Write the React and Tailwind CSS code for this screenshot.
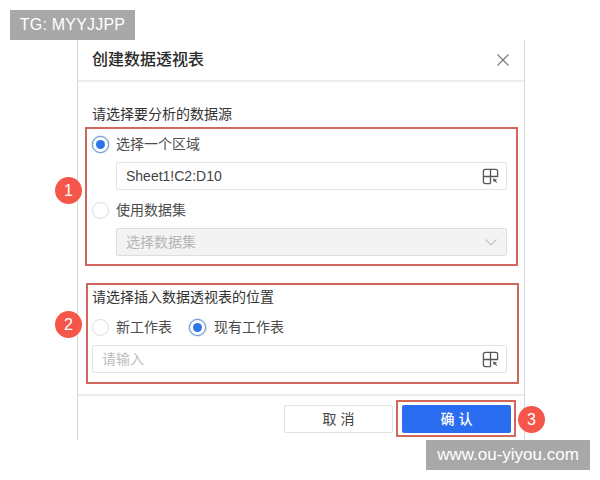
const FONT = "font-['Liberation_Sans','Noto_Sans_CJK_SC',sans-serif]";

function Radio({ checked }) {
  if (checked) {
    return (
      <span className="flex h-[17px] w-[17px] shrink-0 items-center justify-center rounded-full border border-[#5b86c9] bg-white shadow-[0_0_0_1px_#dce8fa]">
        <span className="h-[9px] w-[9px] rounded-full bg-[#2f74e6]" />
      </span>
    );
  }
  return <span className="h-[17px] w-[17px] shrink-0 rounded-full border border-[#dcdcdc] bg-white" />;
}

function RangeIcon() {
  return (
    <svg width="17" height="17" viewBox="0 0 18 18" fill="none" stroke="#555" strokeWidth="1.4">
      <path d="M9 16.500H3.500a2 2 0 0 1-2-2v-11a2 2 0 0 1 2-2h11a2 2 0 0 1 2 2V9H1.500M9 1.500v15" />
      <path d="M11.500 11l4.600 1.500-1.600.9 1.500 2-.8.5-1.400-2-1.200 1.200z" fill="#555" stroke="none" />
    </svg>
  );
}

function Input({ className, children }) {
  return (
    <div className={`flex h-[28px] items-center justify-between rounded-[2px] border border-[#e2e2e2] bg-white pl-[9px] pr-[7px] text-sm ${className}`}>
      {children}
    </div>
  );
}

function Badge({ n, className }) {
  return (
    <span className={`absolute flex h-[27px] w-[27px] items-center justify-center rounded-full bg-[#f4574a] text-base text-white ${className}`}>
      {n}
    </span>
  );
}

export default function App() {
  return (
    <div className={`relative h-[480px] w-[600px] overflow-hidden bg-white ${FONT}`}>
      <div className="absolute left-[10px] top-[10px] flex h-[30px] w-[125px] items-center justify-center bg-[#a8a8a8] text-base tracking-[0.2px] text-white">
        TG: MYYJJPP
      </div>
      <div className="absolute left-[426px] top-[440px] z-10 flex h-[30px] w-[164px] items-center justify-center bg-[#a8a8a8] text-[17px] text-white">
        www.ou-yiyou.com
      </div>

      <div className="pl-[77px] pt-[40px]">
        <div className="flex h-[400px] w-[448px] flex-col border-x border-[#d8d8d8] bg-white">
          <div className="flex h-[42px] items-center justify-between border-b-2 border-[#ececec] pl-[14px] pr-[14px]">
            <span className="text-base font-medium text-[#2b2b2b]">创建数据透视表</span>
            <svg width="14" height="14" viewBox="0 0 14 14" stroke="#777" strokeWidth="1.1">
              <path d="M1.500 1.500l11 11M12.500 1.500l-11 11" />
            </svg>
          </div>

          <div className="mt-[22px] pl-[14px] text-sm leading-5 text-[#333]">请选择要分析的数据源</div>

          <div className="relative ml-[7px] mt-[3px] h-[139px] w-[433px] border-2 border-[#d0665c] pl-[5px] pr-[9px] pt-[5px]">
            <Badge n="1" className="left-[-32px] top-[48px]" />
            <div className="flex h-5 items-center gap-[7px] text-sm text-[#4d4d4d]">
              <Radio checked />
              选择一个区域
            </div>
            <Input className="ml-[24px] mt-[8px] text-[#444]">
              Sheet1!C2:D10
              <RangeIcon />
            </Input>
            <div className="mt-[10px] flex h-5 items-center gap-[7px] text-sm text-[#4d4d4d]">
              <Radio />
              使用数据集
            </div>
            <Input className="ml-[24px] mt-[8px] !border-[#dedede] !bg-[#f3f3f3] text-[#b5b5b5]">
              选择数据集
              <svg width="14" height="14" viewBox="0 0 14 14" fill="none" stroke="#c4c4c4" strokeWidth="1.1" className="mr-[1px]">
                <path d="M1.500 4.500L7 10l5.500-5.500" />
              </svg>
            </Input>
          </div>

          <div className="relative ml-[8px] mt-[17px] h-[101px] w-[433px] border-2 border-[#d0665c] pl-[4px] pr-[10px] pt-[2px]">
            <Badge n="2" className="left-[-33px] top-[26px]" />
            <div className="text-sm leading-5 text-[#333]">请选择插入数据透视表的位置</div>
            <div className="mt-[10px] flex h-5 items-center text-sm text-[#4d4d4d]">
              <Radio />
              <span className="ml-[7px]">新工作表</span>
              <span className="ml-[17px]"><Radio checked /></span>
              <span className="ml-[8px]">现有工作表</span>
            </div>
            <Input className="mt-[8px] text-[#bdbdbd]">
              请输入
              <RangeIcon />
            </Input>
          </div>

          <div className="mt-[10px] flex flex-1 items-start justify-end border-t-2 border-[#ececec]">
            <button className="mt-[9px] flex h-[28px] w-[109px] items-center justify-center rounded-[2px] border border-[#e2e2e2] bg-white pl-[4px] text-sm tracking-[4px] text-[#444]">
              取消
            </button>
            <div className="relative ml-[3px] mr-[8px] mt-[4px] flex h-[37px] w-[120px] items-center justify-center border-2 border-[#d0665c]">
              <button className="flex h-[28px] w-[109px] items-center justify-center rounded-[2px] bg-[#2a6df0] pl-[5px] text-sm font-medium tracking-[4px] text-white">
                确认
              </button>
              <Badge n="3" className="right-[-31px] top-[4px]" />
            </div>
          </div>
        </div>
      </div>
    </div>
  );
}
